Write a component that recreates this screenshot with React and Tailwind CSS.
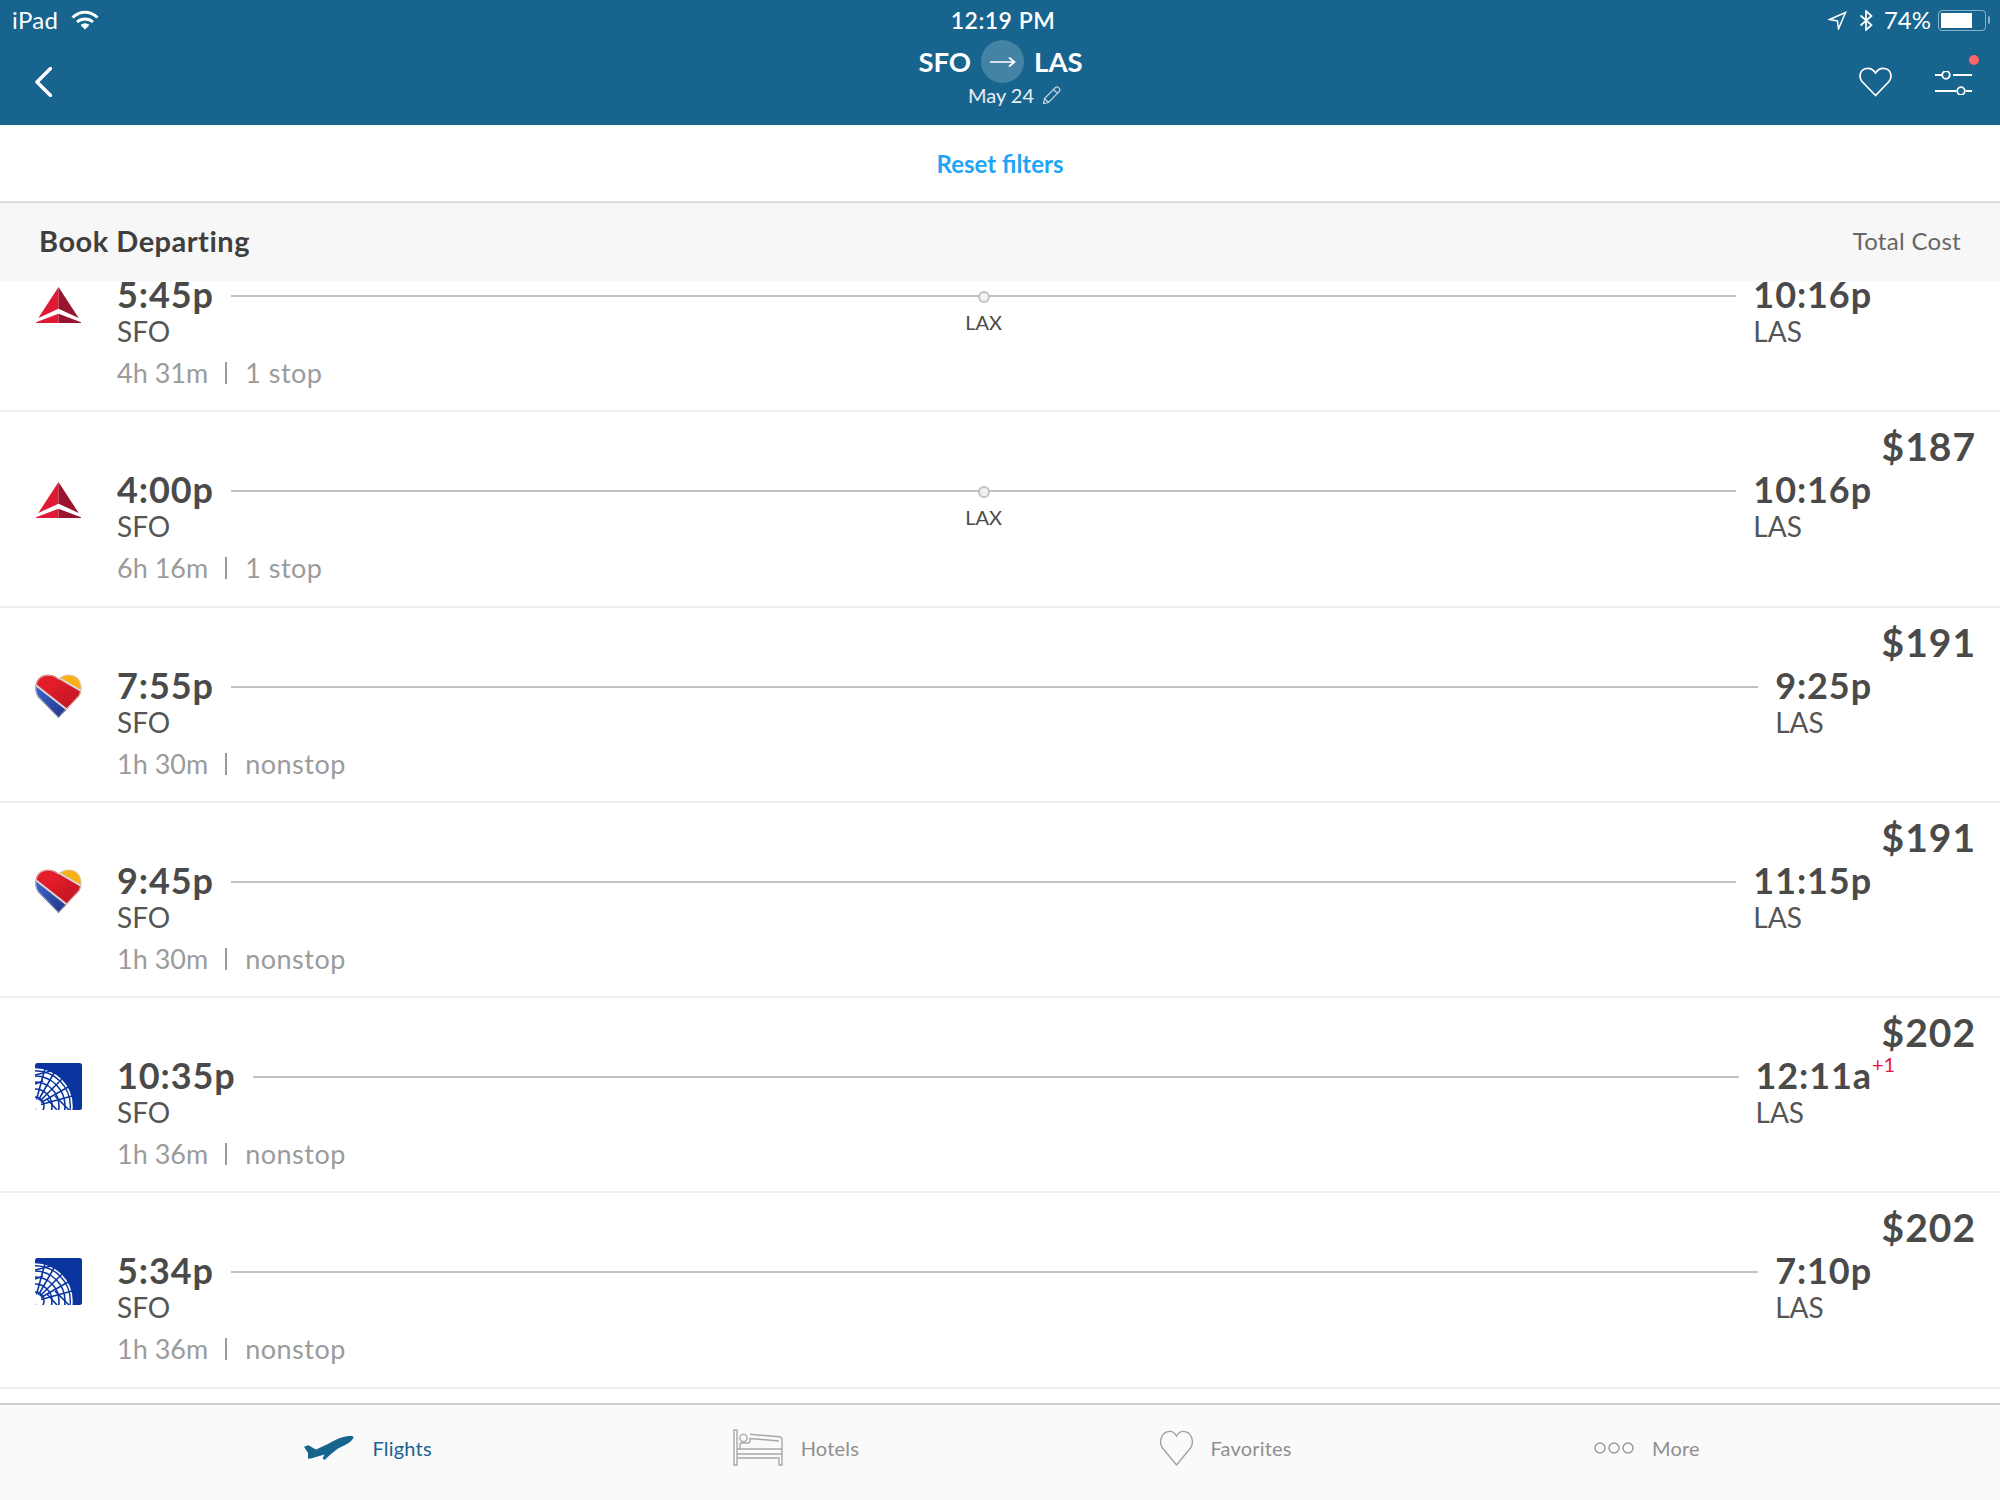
import React from "react";

const font = { fontFamily: '"Lato", "Noto Sans", sans-serif' };

const flights = [
  { logo: "delta", dep: "5:45p", arr: "10:16p", dur: "4h 31m", stops: "1 stop", via: "LAX", clip: true },
  { logo: "delta", dep: "4:00p", arr: "10:16p", dur: "6h 16m", stops: "1 stop", via: "LAX", price: "$187" },
  { logo: "southwest", dep: "7:55p", arr: "9:25p", dur: "1h 30m", stops: "nonstop", price: "$191" },
  { logo: "southwest", dep: "9:45p", arr: "11:15p", dur: "1h 30m", stops: "nonstop", price: "$191" },
  { logo: "united", dep: "10:35p", arr: "12:11a", dur: "1h 36m", stops: "nonstop", price: "$202", plus: true },
  { logo: "united", dep: "5:34p", arr: "7:10p", dur: "1h 36m", stops: "nonstop", price: "$202" },
];

const Delta = () => (
  <svg width="45" height="36" viewBox="0 0 45 36">
    <path d="M22.5 0L2.3 31L22.5 21.7Z" fill="#e01a35" />
    <path d="M22.5 0L42.7 31L22.5 21.7Z" fill="#98142f" />
    <path d="M22.5 26.7L0 35.2V36H22.5Z" fill="#e01a35" />
    <path d="M22.5 26.7L45 35.2V36H22.5Z" fill="#98142f" />
  </svg>
);

const Southwest = () => (
  <svg width="47" height="44" viewBox="0 0 47 44">
    <defs>
      <linearGradient id="swRed" x1="0" y1="0" x2="1" y2="1">
        <stop offset="0.3" stopColor="#e51d2a" />
        <stop offset="1" stopColor="#b1141f" />
      </linearGradient>
      <linearGradient id="swBlue" x1="0" y1="0" x2="1" y2="1">
        <stop offset="0.2" stopColor="#3a5fc4" />
        <stop offset="1" stopColor="#1c2f7e" />
      </linearGradient>
      <clipPath id="swHeart">
        <path d="M23.5 44L3 23C-2 16 0 3 10 1C16 0 20 2 23.5 4.5C27 1 32 0 37 1C46 3 49 14 44 22Z" />
      </clipPath>
    </defs>
    <g clipPath="url(#swHeart)">
      <rect width="47" height="44" fill="#fbb017" />
      <path d="M-2 -2H16L23 3.5L50 18L32 42L-2 10Z" fill="url(#swRed)" />
      <path d="M-2 10L33 37L23 48L-2 30Z" fill="url(#swBlue)" />
      <path d="M0 10.5L33 36.5" stroke="#d8d8d8" strokeWidth="2" />
      <path d="M23 3.5L47 17.5" stroke="#d8d8d8" strokeWidth="2" />
    </g>
    <path d="M23.5 43.3L3.4 22.6C-1.4 16 .5 3.5 10.2 1.6C16 .6 20 2.7 23.5 5.2C27 1.7 32 .6 36.8 1.6C45.6 3.6 48.4 14 43.6 21.7Z" fill="none" stroke="#cfcfcf" strokeWidth="0.8" />
  </svg>
);

const United = () => (
  <svg width="47" height="47" viewBox="0 0 47 47">
    <defs>
      <clipPath id="uaClip">
        <rect width="47" height="47" rx="2.5" />
      </clipPath>
    </defs>
    <g clipPath="url(#uaClip)">
      <rect width="47" height="47" fill="#0a35a0" />
      <circle cx="0" cy="43" r="37.7" fill="#fff" />
      <g fill="none" stroke="#0a35a0">
        <circle cx="0" cy="43" r="35.3" strokeWidth="1.4" />
        <circle cx="0" cy="43" r="30" strokeWidth="1.6" />
        <circle cx="0" cy="43" r="24" strokeWidth="1.6" />
        <circle cx="0" cy="43" r="17" strokeWidth="1.6" />
        <circle cx="0" cy="43" r="9" strokeWidth="1.6" />
        <path d="M6 41.4L37 33" strokeWidth="1.6" />
        <path d="M6 39.5L34 23.5" strokeWidth="1.6" />
        <path d="M5 38L27 16" strokeWidth="1.6" />
        <path d="M3.5 37L19.5 9" strokeWidth="1.6" />
        <path d="M1.5 36.5L10 5.5" strokeWidth="1.6" />
        <path d="M0 12L16 8M0 21L8 18M12 36L22 47M20 33L34 47" strokeWidth="1.6" />
      </g>
    </g>
  </svg>
);

const logos = { delta: Delta, southwest: Southwest, united: United };

const FlightRow = ({ f }) => {
  const Logo = logos[f.logo];
  return (
    <div className={`h-[195.25px] shrink-0 border-b-2 border-[#eeeeee] pl-[35px] ${f.clip ? "-mt-[64px]" : ""}`}>
      <div className="h-[59px] pr-[24px] text-right text-[39px] font-bold leading-[68px] tracking-[1px] text-[#4a4a4a]">{f.price}</div>
      <div className="flex items-start pr-[128px]">
        <div className="mr-[35px] flex h-[58px] w-[47px] shrink-0 items-center justify-center">
          <Logo />
        </div>
        <div>
          <div className="h-[40px] text-[36px] font-bold leading-[36px] tracking-[0.9px] text-[#4a4a4a]">{f.dep}</div>
          <div className="text-[28px] leading-[30px] text-[#555555]">SFO</div>
          <div className="mt-[12px] flex w-0 items-center whitespace-nowrap text-[27px] leading-[30px] text-[#9b9b9b]">
            <span>{f.dur}</span>
            <span className="mr-[18px] ml-[17px] h-[22px] w-[2px] shrink-0 bg-[#9b9b9b]" />
            <span className="tracking-[0.5px]">{f.stops}</span>
          </div>
        </div>
        <div className="mx-[17px] flex-1">
          <div className="relative flex h-[40px] items-center">
            <div className="h-[2px] w-full bg-[#c2c2c2]" />
            {f.via && (
              <>
                <div className="absolute top-[14.5px] left-1/2 -ml-[6px] h-[12px] w-[12px] rounded-full border-2 border-[#c2c2c2] bg-[#f2f2f2]" />
                <div className="absolute top-[34px] left-1/2 -translate-x-1/2 text-[20px] leading-[24px] text-[#4a4a4a]">{f.via}</div>
              </>
            )}
          </div>
        </div>
        <div className="relative">
          <div className="h-[40px] text-[36px] font-bold leading-[36px] tracking-[0.9px] text-[#4a4a4a]">{f.arr}</div>
          <div className="text-[28px] leading-[30px] text-[#555555]">LAS</div>
          {f.plus && <span className="absolute -top-[4px] left-full text-[20px] leading-[22px] text-[#e5173f]">+1</span>}
        </div>
      </div>
    </div>
  );
};

const TabHeart = () => (
  <svg width="33" height="36" viewBox="0 0 33 36" fill="none" stroke="#a3a3a3" strokeWidth="1.4">
    <path d="M16.5 35L2.5 18C-1 13 .5 4 7 1.8C11 .6 14.5 2.5 16.5 6C18.5 2.5 22 .6 26 1.8C32.5 4 34 13 30.5 18Z" />
  </svg>
);

const Plane = () => (
  <svg width="50" height="24" viewBox="0 0 50 24" fill="#17648f">
    <path d="M0 10.7L4.3 9.3L12 13.5L25 7.5C28 5.5 33 3 36 2C40 .6 45 -.3 47.7 0C49.5 .2 49.8 1.2 49.2 2.2C47.5 5 45 7 43 8L34 12.5L27 18L20.5 24L18.7 22.2L20.5 18.5L7 22.5L4 22.8V17Z" />
  </svg>
);

const Bed = () => (
  <svg width="50" height="37" viewBox="0 0 50 37" fill="none" stroke="#a8a8a8" strokeWidth="1.4">
    <path d="M1 36V1H4V36ZM4 25H49V36H46V29H4Z" />
    <path d="M4 20H49V25M49 20V10C49 8.5 48 8 46 7.8L17 5.2" />
    <circle cx="10.5" cy="9" r="3.6" />
    <path d="M7 14V20M7 14H15C16.5 14 17 13 17 11.5V9.5L46 12" />
  </svg>
);

const Dots = () => (
  <svg width="40" height="14" viewBox="0 0 40 14" fill="none" stroke="#999999" strokeWidth="1.4">
    <circle cx="6" cy="7" r="5" />
    <circle cx="20" cy="7" r="5" />
    <circle cx="34" cy="7" r="5" />
  </svg>
);

const Tab = ({ icon, label, active, className = "" }) => (
  <div className={`flex items-center justify-center gap-[18px] pb-[10px] ${className}`}>
    {icon}
    <span className={`text-[20px] tracking-[0.2px] ${active ? "text-[#17648f]" : "text-[#8f8f8f]"}`}>{label}</span>
  </div>
);

export default function App() {
  return (
    <div className="flex h-[1500px] w-[2000px] flex-col overflow-hidden bg-white" style={font}>
      <header className="h-[125px] shrink-0 bg-[#17648f] text-white">
        <div className="grid h-[40px] grid-cols-3 items-center pr-[10px] pl-[12px] text-[24px]">
          <div className="flex items-center gap-[13px]">
            <span className="tracking-[0.3px]">iPad</span>
            <svg width="28" height="20" viewBox="0 0 28 20" fill="none" stroke="#fff" strokeWidth="3">
              <path d="M1.5 7.5C9 .5 19 .5 26.5 7.5" />
              <path d="M6 12C10.5 8 17.5 8 22 12" />
              <path d="M10.5 16C12.5 14.5 15.5 14.5 17.5 16" />
              <path d="M14 19.5L11.5 17C13 15.8 15 15.8 16.5 17Z" fill="#fff" stroke="none" />
            </svg>
          </div>
          <div className="pl-[4px] text-center text-[23px] font-semibold tracking-[0.5px]">12:19 PM</div>
          <div className="flex items-center justify-end">
            <svg width="19" height="19" viewBox="0 0 19 19" fill="none" stroke="#fff" strokeWidth="1.5">
              <path d="M17.5 1.5L1.5 8.5L9.5 10L10.5 18Z" />
            </svg>
            <svg className="ml-[12px]" width="15" height="21" viewBox="0 0 15 21" fill="none" stroke="#fff" strokeWidth="1.7">
              <path d="M1.5 5.5L12.5 15L7 20V1L12.5 6L1.5 15.5" />
            </svg>
            <span className="ml-[10px]">74%</span>
            <div className="ml-[7px] flex h-[21px] w-[48px] items-center rounded-[4px] border border-white/50 p-[2px]">
              <div className="h-full w-[74%] bg-white" />
            </div>
            <div className="ml-[2px] h-[8px] w-[2px] rounded-r-sm bg-white/50" />
          </div>
        </div>
        <div className="grid h-[85px] grid-cols-3 pr-[28px] pl-[35px]">
          <div className="pt-[27px]">
            <svg width="17" height="30" viewBox="0 0 17 30" fill="none" stroke="#fff" strokeWidth="3.5" strokeLinecap="round" strokeLinejoin="round">
              <path d="M15.5 1.5L2 15L15.5 28.5" />
            </svg>
          </div>
          <div className="flex flex-col items-center pr-[6px]">
            <div className="flex items-center gap-[10px] text-[27.5px] font-bold leading-[43px]">
              <span>SFO</span>
              <div className="flex h-[43px] w-[43px] items-center justify-center rounded-full bg-white/20">
                <svg width="26" height="12" viewBox="0 0 26 12" fill="none" stroke="#fff" strokeWidth="1.7">
                  <path d="M0 6H24M19 1.5L24.5 6L19 10.5" />
                </svg>
              </div>
              <span>LAS</span>
            </div>
            <div className="flex items-center gap-[8px] pl-[28px] text-[20px] leading-[24px] text-white/90">
              <span>May 24</span>
              <svg width="19" height="19" viewBox="0 0 19 19" fill="none" stroke="#c5d8e3" strokeWidth="1.2">
                <path d="M1.5 17.5L2.5 12.5L13.5 1.5C14.5 .8 15.5 .8 16.5 1.6L17.4 2.5C18 3.5 18 4.5 17.4 5.4L6.5 16.5ZM2.5 12.5L6.5 16.5M11.5 3.5L15.5 7.5" />
              </svg>
            </div>
          </div>
          <div className="flex items-start justify-end gap-[43px] pt-[27px]">
            <svg width="33" height="30" viewBox="0 0 33 30" fill="none" stroke="#fff" strokeWidth="1.7">
              <path d="M16.5 28.5L3 14.5C-.5 10 .8 3.6 6 1.8C10 .6 14 2.2 16.5 6C19 2.2 23 .6 27 1.8C32.2 3.6 33.5 10 30 14.5Z" />
            </svg>
            <div className="relative mt-[4px]">
              <svg width="37" height="24" viewBox="0 0 37 24" fill="none" stroke="#fff" strokeWidth="1.8">
                <path d="M0 4H7.5M18 4H37M0 20H21.5M31 20H37" />
                <circle cx="11" cy="4" r="3.8" />
                <circle cx="26" cy="20" r="3.8" />
              </svg>
              <div className="absolute -top-[16px] -right-[7px] h-[10px] w-[10px] rounded-full bg-[#ff6469]" />
            </div>
          </div>
        </div>
      </header>

      <div className="flex h-[78px] shrink-0 items-center justify-center border-b-2 border-[#dcdcdc] pt-[2px] text-[24px] font-bold text-[#1ea5f7]">
        Reset filters
      </div>

      <div className="z-10 flex h-[78px] shrink-0 items-center justify-between bg-[#f7f7f7] pr-[39px] pb-[2px] pl-[39px]">
        <span className="text-[29px] font-bold tracking-[0.5px] text-[#3f3f3f]">Book Departing</span>
        <span className="text-[24px] tracking-[0.3px] text-[#666666]">Total Cost</span>
      </div>

      <div className="flex flex-1 flex-col overflow-hidden">
        {flights.map((f) => (
          <FlightRow key={f.dep} f={f} />
        ))}
      </div>

      <nav className="grid h-[97px] shrink-0 grid-cols-4 border-t-2 border-[#cfcfcf] bg-[#fafafa] pr-[140px] pl-[155px]">
        <Tab icon={<Plane />} label="Flights" active />
        <Tab icon={<Bed />} label="Hotels" className="pl-[3px]" />
        <Tab icon={<TabHeart />} label="Favorites" className="pl-[10px]" />
        <Tab icon={<Dots />} label="More" />
      </nav>
    </div>
  );
}
